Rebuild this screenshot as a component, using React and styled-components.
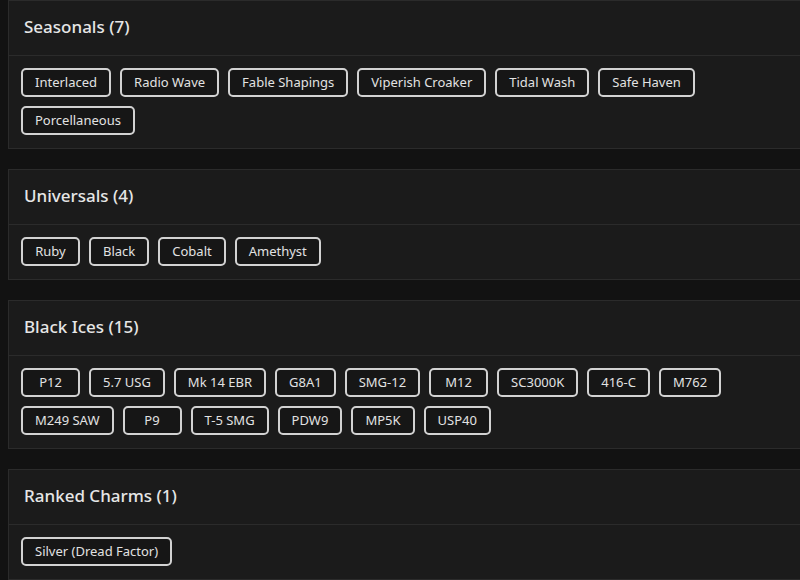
import React from "react";
import styled, { createGlobalStyle } from "styled-components";

const sections = [
  {
    title: "Seasonals",
    items: [
      "Interlaced",
      "Radio Wave",
      "Fable Shapings",
      "Viperish Croaker",
      "Tidal Wash",
      "Safe Haven",
      "Porcellaneous",
    ],
  },
  { title: "Universals", items: ["Ruby", "Black", "Cobalt", "Amethyst"] },
  {
    title: "Black Ices",
    items: [
      "P12",
      "5.7 USG",
      "Mk 14 EBR",
      "G8A1",
      "SMG-12",
      "M12",
      "SC3000K",
      "416-C",
      "M762",
      "M249 SAW",
      "P9",
      "T-5 SMG",
      "PDW9",
      "MP5K",
      "USP40",
    ],
  },
  { title: "Ranked Charms", items: ["Silver (Dread Factor)"] },
];

const App = () => {
  return (
    <>
      <GlobalStyle />
      <Page>
        {sections.map((s) => (
          <Card key={s.title}>
            <Header>
              <h2>
                {s.title} ({s.items.length})
              </h2>
            </Header>
            <Body>
              {s.items.map((item) => (
                <Chip key={item}>{item}</Chip>
              ))}
            </Body>
          </Card>
        ))}
      </Page>
    </>
  );
};

const GlobalStyle = createGlobalStyle`
  html, body {
    margin: 0;
    background-color: #121212;
    overflow: hidden;
  }
`;

const Page = styled.div`
  box-sizing: border-box;
  width: 806px;
  padding-left: 8px;
  font-family: "Noto Sans", "Liberation Sans", sans-serif;
  display: flex;
  flex-direction: column;
  gap: 20px;
`;

const Card = styled.section`
  background-color: #1b1b1b;
  border: 1px solid #2b2b2b;
`;

const Header = styled.div`
  box-sizing: border-box;
  height: 55px;
  display: flex;
  align-items: center;
  padding: 0 15px 3px;
  border-bottom: 1px solid #2b2b2b;

  h2 {
    margin: 0;
    font-size: 17px;
    font-weight: 500;
    color: #e6e6e6;
  }
`;

const Body = styled.div`
  display: flex;
  flex-wrap: wrap;
  gap: 9px;
  padding: 12px 12px 13px;
`;

const Chip = styled.button`
  min-width: 59px;
  height: 29px;
  padding: 0 12px 1px;
  border: 2px solid #d2d2d2;
  border-radius: 5px;
  background-color: #161616;
  color: #e2e2e2;
  font-family: inherit;
  font-size: 13px;
  cursor: pointer;
`;

export default App;
